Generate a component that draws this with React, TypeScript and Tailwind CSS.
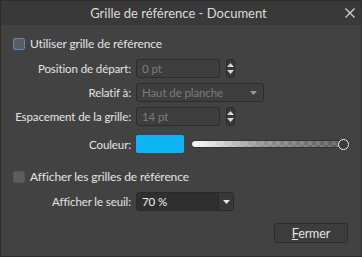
import React from "react";

const font = { fontFamily: 'Lato, "Noto Sans", sans-serif' };

function Spinner() {
  return (
    <div className="ml-[6px] flex h-[19px] w-[9px] flex-col items-center justify-center gap-[3px] rounded-[3px] border border-[#2a2a2a] bg-[#383838]">
      <svg width="7" height="4" viewBox="0 0 7 4"><path d="M0 4 L3.5 0 L7 4 Z" fill="#d8d8d8" /></svg>
      <svg width="7" height="4" viewBox="0 0 7 4"><path d="M0 0 L3.5 4 L7 0 Z" fill="#d8d8d8" /></svg>
    </div>
  );
}

function Caret({ color = "#9a9a9a" }: { color?: string }) {
  return (
    <svg width="7" height="4" viewBox="0 0 7 4"><path d="M0 0 L3.5 4 L7 0 Z" fill={color} /></svg>
  );
}

export default function App() {
  return (
    <div className="flex h-[257px] w-[362px] flex-col overflow-hidden whitespace-nowrap border border-[#2c2c2c] bg-[#424242] text-[11.5px] leading-[15px] tracking-[-0.1px] text-[#e4e4e4]" style={font}>
      <div className="relative flex h-[24px] shrink-0 items-center justify-center bg-[#393939] pr-[5px] text-[13px] tracking-normal text-[#dcdcdc]">
        <span>Grille de référence - Document</span>
        <svg className="absolute right-[6px] top-[7px]" width="10" height="10" viewBox="0 0 10 10">
          <path d="M0.5 0.5 L9.5 9.5 M9.5 0.5 L0.5 9.5" stroke="#d0d0d0" strokeWidth="1.3" />
        </svg>
      </div>

      <div className="flex items-center gap-[5px] pl-[12px] pt-[11px] text-[12px]">
        <div className="h-[12px] w-[12px] rounded-[2px] border border-[#5b88c8] bg-[#5d5d5d]" />
        <span>Utiliser grille de référence</span>
      </div>

      <div className="mt-[8px] grid grid-cols-[130px_auto] items-center gap-x-[5px] gap-y-[5px]">
        <span className="text-right">Position de départ:</span>
        <div className="flex items-center">
          <div className="flex h-[19px] w-[84px] items-center rounded-[3px] border border-[#2c2c2c] bg-[#3e3e3e] pl-[5px] text-[#7c7c7c]">0 pt</div>
          <Spinner />
        </div>

        <span className="text-right">Relatif à:</span>
        <div className="flex h-[19px] w-[128px] items-center justify-between rounded-[3px] border border-[#2c2c2c] bg-[#3e3e3e] pl-[5px] pr-[6px] text-[#7c7c7c]">
          <span>Haut de planche</span>
          <Caret />
        </div>

        <span className="text-right">Espacement de la grille:</span>
        <div className="flex items-center">
          <div className="flex h-[19px] w-[84px] items-center rounded-[3px] border border-[#2c2c2c] bg-[#3e3e3e] pl-[5px] text-[#7c7c7c]">14 pt</div>
          <Spinner />
        </div>
      </div>

      <div className="mt-[9px] grid grid-cols-[130px_auto] items-center gap-x-[5px]">
        <span className="text-right">Couleur:</span>
        <div className="flex items-center">
          <div className="h-[18px] w-[48px] rounded-[2px] bg-[#0cb6f2]" />
          <div className="relative ml-[7px] flex h-[12px] w-[155px] items-center">
            <div
              className="h-[8px] w-full rounded-[4px] border border-[#333333]"
              style={{
                backgroundImage:
                  "linear-gradient(to right, rgba(255,255,255,1), rgba(255,255,255,0.35) 45%, rgba(255,255,255,0)), repeating-conic-gradient(#6e6e6e 0% 25%, #585858 0% 50%)",
                backgroundSize: "100% 100%, 8px 8px",
              }}
            />
            <div className="absolute right-[-3px] top-[1px] h-[11px] w-[11px] rounded-full border-[1.5px] border-[#eeeeee] bg-[#3a3a3a]" />
          </div>
        </div>
      </div>

      <div className="mt-[16px] flex items-center gap-[5px] pl-[12px] text-[12px]">
        <div className="h-[12px] w-[12px] rounded-[2px] border border-[#555] bg-[#5d5d5d]" />
        <span>Afficher les grilles de référence</span>
      </div>

      <div className="mt-[8px] grid grid-cols-[130px_auto] items-center gap-x-[5px]">
        <span className="text-right">Afficher le seuil:</span>
        <div className="flex h-[19px] w-[98px] items-center rounded-[3px] border border-[#2a2a2a] bg-[#2f2f2f] text-[#f0f0f0]">
          <span className="flex-1 pl-[5px]">70 %</span>
          <div className="flex h-full w-[15px] items-center justify-center border-l border-[#2a2a2a] bg-[#383838]">
            <Caret color="#e8e8e8" />
          </div>
        </div>
      </div>

      <div className="mt-[12px] flex justify-end pr-[13px]">
        <div className="flex h-[20px] w-[74px] items-center justify-center rounded-[3px] border border-[#2c2c2c] bg-[#3c3c3c] text-[12.5px] text-[#e4e4e4]">
          <span><span className="underline">F</span>ermer</span>
        </div>
      </div>
    </div>
  );
}
